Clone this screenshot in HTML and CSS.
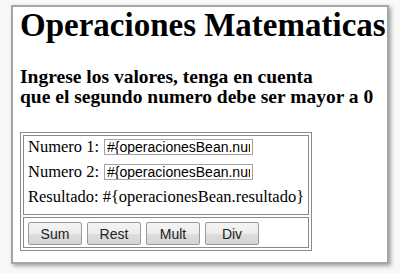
FILE: index.html
```html
<!DOCTYPE html>
<html lang="es">
<head>
<meta charset="utf-8">
<title>Operaciones Matematicas</title>
<link rel="stylesheet" href="styles.css">
</head>
<body>
<div class="frame">
  <h1 class="title">Operaciones Matematicas</h1>
  <h3 class="subtitle">Ingrese los valores, tenga en cuenta<br>que el segundo numero debe ser mayor a 0</h3>
  <div class="grid">
    <div class="cell fields">
      <div class="row"><span class="label">Numero 1:</span><input class="field" type="text" value="#{operacionesBean.numero1}"></div>
      <div class="row"><span class="label">Numero 2:</span><input class="field" type="text" value="#{operacionesBean.numero2}"></div>
      <div class="row"><span class="label">Resultado: #{operacionesBean.resultado}</span></div>
    </div>
    <div class="cell actions">
      <button class="btn" type="button">Sum</button>
      <button class="btn" type="button">Rest</button>
      <button class="btn" type="button">Mult</button>
      <button class="btn" type="button">Div</button>
    </div>
  </div>
</div>
</body>
</html>
```

FILE: styles.css
```css
html, body {
  margin: 0;
  padding: 0;
}
body {
  background: #f8f8f8;
  width: 400px;
  height: 273px;
  overflow: hidden;
  font-family: "Liberation Serif", "Times New Roman", serif;
  color: #000;
}
.frame {
  box-sizing: border-box;
  margin: 5px 0 0 11px;
  width: 378px;
  height: 259px;
  border: 2px solid #a6a6a6;
  background: #fff;
  box-shadow: 2px 2px 4px rgba(0, 0, 0, 0.35);
  padding: 0 0 0 7px;
}
.title {
  margin: 0;
  font-size: 33px;
  line-height: 36px;
  font-weight: 700;
}
.subtitle {
  margin: 24px 0 0 0;
  font-size: 19.5px;
  line-height: 20px;
  font-weight: 700;
}
.grid {
  box-sizing: border-box;
  margin-top: 25px;
  width: 292px;
  border: 1px solid #8a8a8a;
  padding: 2px;
  display: flex;
  flex-direction: column;
  gap: 2px;
}
.cell {
  border: 1px solid #8a8a8a;
}
.fields {
  padding: 3px 4px 0 4px;
  height: 75px;
}
.row {
  display: flex;
  align-items: baseline;
  gap: 5px;
  height: 25px;
  font-size: 16.5px;
}
.label {
  line-height: 16px;
  white-space: nowrap;
}
.field {
  box-sizing: border-box;
  width: 149px;
  height: 16px;
  margin: 0;
  padding: 0 2px;
  border: 1px solid #a3a3a3;
  font-family: "Liberation Sans", Arial, sans-serif;
  font-size: 14px;
  color: #000;
  background: #fff;
}
.actions {
  display: flex;
  gap: 5px;
  padding: 4px 4px 2px 4px;
}
.btn {
  box-sizing: border-box;
  width: 54px;
  height: 23px;
  margin: 0;
  padding: 0;
  border: 1px solid #9a9a9a;
  border-radius: 2px;
  background: linear-gradient(#f4f4f4, #ececec 50%, #dedede 51%, #d4d4d4);
  font-family: "Liberation Sans", Arial, sans-serif;
  font-size: 14px;
  color: #222;
}
```
